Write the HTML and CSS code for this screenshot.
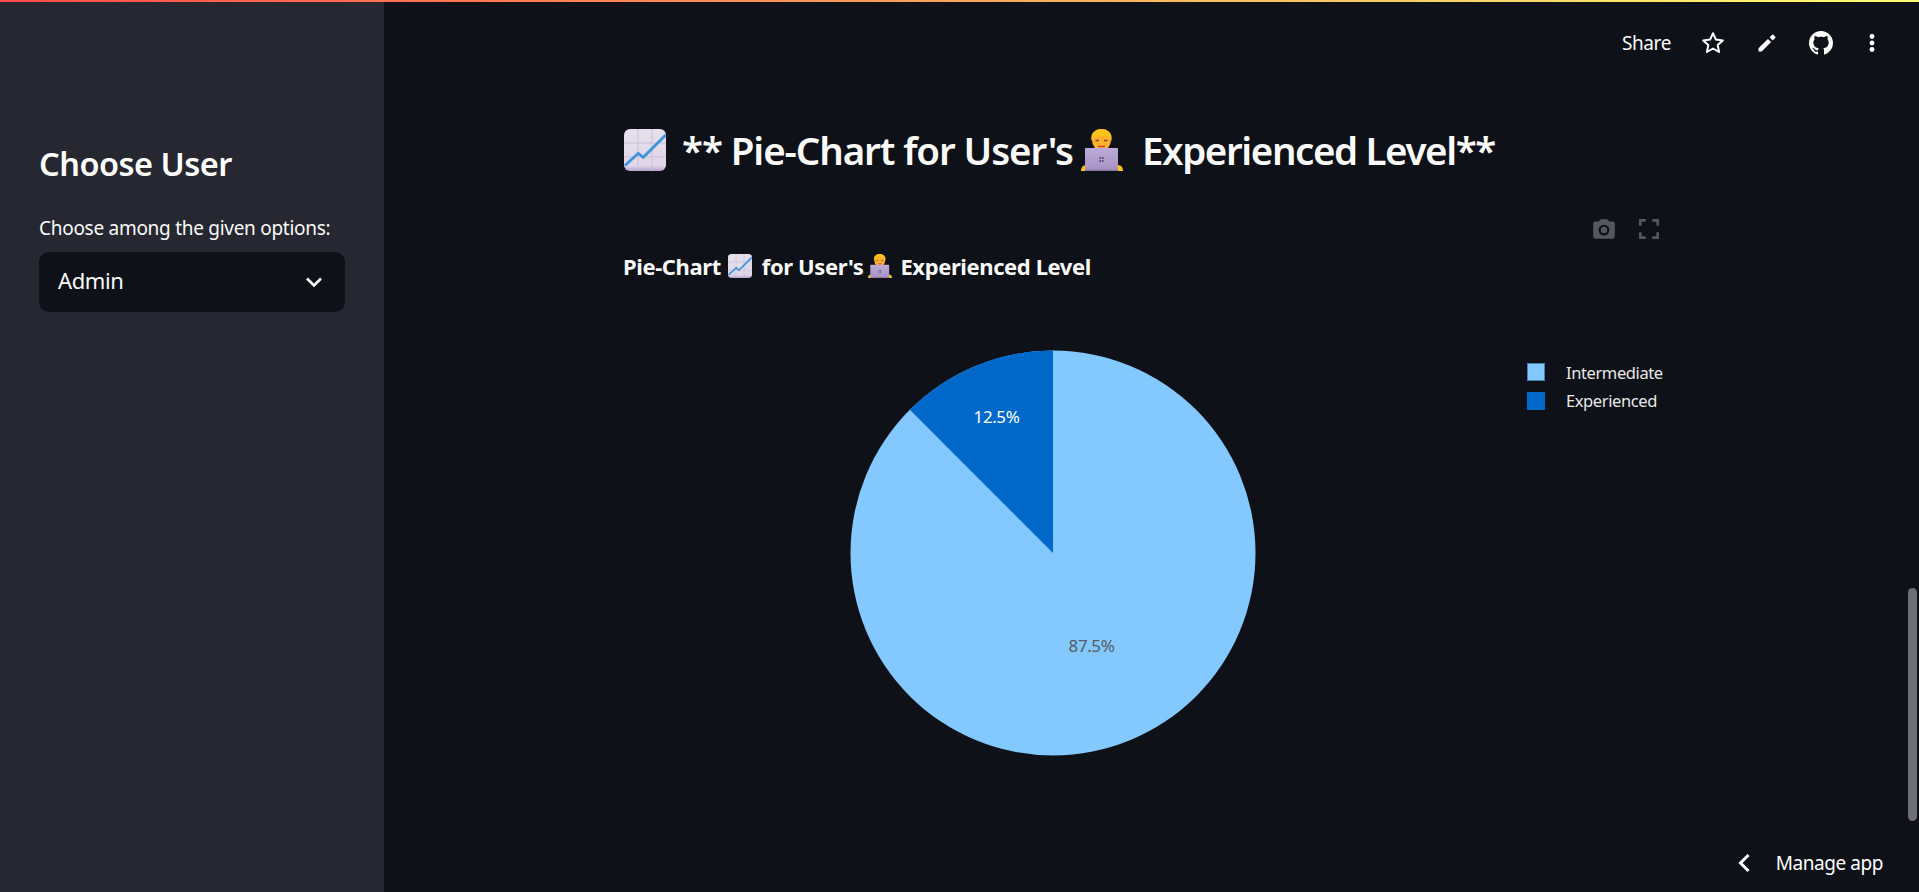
FILE: index.html
```html
<!DOCTYPE html>
<html lang="en">
<head>
    <meta charset="UTF-8">
    <title>Pie-Chart for User's Experienced Level</title>
    <link rel="stylesheet" href="styles.css">
</head>
<body>
<svg class="defs" width="0" height="0">
    <defs>
        <linearGradient id="chartBg" x1="0" y1="0" x2="0" y2="1">
            <stop offset="0" stop-color="#e6e0ec"/>
            <stop offset="0.88" stop-color="#dfd6e8"/>
            <stop offset="1" stop-color="#b39fcf"/>
        </linearGradient>
        <linearGradient id="laptopBg" x1="0" y1="0" x2="0" y2="1">
            <stop offset="0" stop-color="#bcabd9"/>
            <stop offset="1" stop-color="#a792c4"/>
        </linearGradient>
        <symbol id="emojiChart" viewBox="0 0 42 42">
            <rect width="42" height="42" rx="6" fill="url(#chartBg)"/>
            <path d="M14 0V42M28 0V42M0 14H42M0 28H42" stroke="#c9bfd3" stroke-width="1"/>
            <path d="M1 36.500L14.300 24.300L19.300 28.300L41.700 6" fill="none" stroke="#3f95dc" stroke-width="2.800"/>
        </symbol>
        <symbol id="emojiDev" viewBox="0 0 42 42">
            <path d="M0 42C0 38 2 36 6 36H36C40 36 42 38 42 42Z" fill="#fcc21b"/>
            <ellipse cx="20.500" cy="11" rx="9.500" ry="11" fill="#ffb02e"/>
            <path d="M10.500 12C9 3 15 0 20.500 0C26 0 32 3 30.500 12C29 8 27 7 20.500 7C14 7 12 8 10.500 12Z" fill="#fcc21b"/>
            <path d="M14.500 11.500h3.500M23 11.500h3.500" stroke="#7d4533" stroke-width="1.300" fill="none"/>
            <path d="M17 17.500h7" stroke="#c4403d" stroke-width="1.500" fill="none"/>
            <rect x="4" y="19" width="33" height="22" rx="1" fill="url(#laptopBg)"/>
            <rect x="4" y="40.500" width="33" height="1.500" fill="#8a76a5"/>
            <path d="M18.500 28h1.600v2h-1.600zM21 28h1.600v2h-1.600zM18.500 31h1.600v2h-1.600zM21 31h1.600v2h-1.600z" fill="#5d4a78"/>
        </symbol>
    </defs>
</svg>

<div class="topline"></div>

<div class="app">
    <aside class="sidebar">
        <h2 class="side-title">Choose User</h2>
        <label class="side-label">Choose among the given options:</label>
        <div class="select">
            <span class="select-value">Admin</span>
            <svg class="select-arrow" viewBox="0 0 24 24"><path d="M5 8.500l7 7 7-7" fill="none" stroke="#fff" stroke-width="2.600"/></svg>
        </div>
    </aside>

    <main class="main">
        <header class="toolbar">
            <span class="share">Share</span>
            <svg class="tool-icon" viewBox="0 0 24 24"><path d="M12 2.200l2.900 6.400 6.900.8-5.100 4.700 1.400 6.900-6.100-3.500-6.100 3.500 1.400-6.900-5.100-4.700 6.900-.8z" fill="none" stroke="#fff" stroke-width="2" stroke-linejoin="round"/></svg>
            <svg class="tool-icon" viewBox="0 0 24 24"><path d="M3.500 17.300V20.500h3.200L16.100 11.100l-3.200-3.200zM20.300 6.900a.85.85 0 0 0 0-1.200l-2-2a.85.85 0 0 0-1.200 0l-2.500 2.500 3.200 3.200z" fill="#fff"/></svg>
            <svg class="tool-icon" viewBox="0 0 16 16"><path d="M8 0C3.580 0 0 3.580 0 8c0 3.540 2.290 6.530 5.470 7.590.4.070.55-.17.55-.38 0-.19-.01-.82-.01-1.490-2.010.37-2.530-.49-2.690-.94-.09-.23-.48-.94-.82-1.130-.28-.15-.68-.52-.01-.53.630-.01 1.080.58 1.230.82.720 1.210 1.870.870 2.330.660.070-.520.280-.870.510-1.070-1.780-.2-3.640-.89-3.640-3.950 0-.87.310-1.590.820-2.150-.08-.2-.36-1.020.08-2.120 0 0 .67-.21 2.200.82.640-.18 1.320-.27 2-.27s1.360.09 2 .27c1.530-1.040 2.200-.82 2.200-.82.440 1.100.16 1.920.08 2.120.51.560.82 1.270.82 2.150 0 3.070-1.870 3.750-3.650 3.950.29.250.54.730.54 1.480 0 1.070-.01 1.930-.01 2.200 0 .21.150.46.550.38A8.010 8.010 0 0 0 16 8c0-4.420-3.580-8-8-8z" fill="#fff"/></svg>
            <svg class="tool-icon dots" viewBox="0 0 24 24"><circle cx="12" cy="5.500" r="2.400" fill="#fff"/><circle cx="12" cy="12" r="2.400" fill="#fff"/><circle cx="12" cy="18.500" r="2.400" fill="#fff"/></svg>
        </header>

        <section class="content">
            <h1 class="page-title">
                <svg class="emoji-big first"><use href="#emojiChart"/></svg>
                <span>** Pie-Chart for User's</span>
                <svg class="emoji-big dev"><use href="#emojiDev"/></svg>
                <span class="title-end">Experienced Level**</span>
            </h1>

            <div class="plot">
                <div class="modebar">
                    <svg viewBox="0 0 24 24"><path d="M9 3L7.200 5H4a2 2 0 0 0-2 2v12a2 2 0 0 0 2 2h16a2 2 0 0 0 2-2V7a2 2 0 0 0-2-2h-3.200L15 3zM12 8a5 5 0 1 1 0 10 5 5 0 0 1 0-10zM12 10a3 3 0 1 0 0 6 3 3 0 0 0 0-6z" fill="#55575d" fill-rule="evenodd"/></svg>
                    <svg viewBox="0 0 24 24"><path d="M4 9V4h5M15 4h5v5M20 15v5h-5M9 20H4v-5" fill="none" stroke="#55575d" stroke-width="2.400"/></svg>
                </div>
                <h3 class="plot-title">
                    <span>Pie-Chart</span>
                    <svg class="emoji-small chart"><use href="#emojiChart"/></svg>
                    <span>for User's</span>
                    <svg class="emoji-small dev"><use href="#emojiDev"/></svg>
                    <span>Experienced Level</span>
                </h3>

                <div class="plot-body">
                    <svg class="pie" width="406" height="406" viewBox="0 0 406 406">
                        <circle cx="203" cy="203" r="202.500" fill="#83c9ff"/>
                        <path d="M203 203V.5A202.500 202.500 0 0 0 59.800 59.800Z" fill="#0068c9"/>
                        <text class="pie-label" x="146.500" y="68" fill="#fff">12.5%</text>
                        <text class="pie-label" x="241.500" y="297" fill="#555a63">87.5%</text>
                    </svg>
                    <ul class="legend">
                        <li><i class="swatch light"></i>Intermediate</li>
                        <li><i class="swatch dark"></i>Experienced</li>
                    </ul>
                </div>
            </div>
        </section>

        <div class="scrollbar"></div>
        <div class="manage">
            <svg viewBox="0 0 24 24"><path d="M16.500 4L8.500 12l8 8" fill="none" stroke="#fff" stroke-width="3"/></svg>
            <span>Manage app</span>
        </div>
    </main>
</div>
</body>
</html>
```

FILE: styles.css
```css
* {
    box-sizing: border-box;
}

html, body {
    height: 100%;
}

body {
    margin: 0;
    overflow: hidden;
    background: #0e1117;
    color: #fafafa;
    font-family: "Noto Sans", "Open Sans", sans-serif;
}

.defs {
    position: absolute;
}

.topline {
    height: 2px;
    background: linear-gradient(90deg, #ff4b4b, #ffff6e);
}

.app {
    display: flex;
    height: 890px;
}

/* sidebar */
.sidebar {
    width: 384px;
    flex-shrink: 0;
    padding: 140px 39px 0;
    background: #262730;
}

.side-title {
    margin: 0 0 30px;
    font-size: 32.500px;
    line-height: 44px;
    font-weight: 600;
    letter-spacing: -0.5px;
    color: #fff;
}

.side-label {
    display: block;
    margin-bottom: 12px;
    font-size: 19px;
    line-height: 24px;
    letter-spacing: -0.28px;
}

.select {
    display: flex;
    align-items: center;
    justify-content: space-between;
    width: 306px;
    height: 60px;
    padding: 0 19px 0 19px;
    border-radius: 10px;
    background: #0e1117;
    font-size: 22px;
    letter-spacing: -0.4px;
}

.select-value {
    margin-bottom: 4px;
}

.select-arrow {
    width: 24px;
    height: 24px;
}

/* main area */
.main {
    position: relative;
    flex: 1;
    min-width: 0;
}

.toolbar {
    display: flex;
    align-items: center;
    justify-content: flex-end;
    height: 40px;
    margin-top: 21px;
    padding-right: 35px;
    gap: 30px;
}

.share {
    font-size: 19px;
    letter-spacing: -0.4px;
}

.tool-icon {
    width: 24px;
    height: 24px;
}

.tool-icon.dots {
    margin-left: -3px;
}

.content {
    width: 1050px;
    margin-left: 238px;
    padding-top: 57px;
}

.page-title {
    display: flex;
    align-items: center;
    height: 60px;
    margin: 0;
    font-size: 38.500px;
    font-weight: 600;
    letter-spacing: -1.1px;
    white-space: nowrap;
    color: #fafafa;
}

.title-end {
    letter-spacing: -1.4px;
}

.emoji-big {
    width: 42px;
    height: 42px;
    flex-shrink: 0;
}

.emoji-big.first {
    margin: 0 16px 0 2px;
}

.emoji-big.dev {
    margin: 0 19px 0 8px;
}

.plot {
    position: relative;
    margin-top: 72px;
}

.modebar {
    position: absolute;
    top: -36px;
    right: 10px;
    display: flex;
    gap: 19px;
}

.modebar svg {
    width: 26px;
    height: 26px;
}

.plot-title {
    display: flex;
    align-items: center;
    height: 28px;
    margin: 0;
    padding-left: 1px;
    font-size: 22px;
    font-weight: 700;
    letter-spacing: -0.4px;
    white-space: nowrap;
}

.emoji-small {
    width: 24px;
    height: 24px;
    flex-shrink: 0;
}

.emoji-small.chart {
    margin: 0 10px 0 7px;
}

.emoji-small.dev {
    margin: 0 8px 0 5px;
}

.plot-body {
    display: flex;
    align-items: flex-start;
    margin-top: 70px;
    padding-left: 228px;
}

.pie-label {
    font-size: 17px;
    letter-spacing: -0.4px;
    text-anchor: middle;
    dominant-baseline: middle;
}

.legend {
    list-style: none;
    margin: 8px 0 0 271px;
    padding: 0;
    font-size: 16.500px;
    letter-spacing: -0.4px;
    color: #e8e8e8;
}

.legend li {
    display: flex;
    align-items: center;
    height: 28.500px;
    white-space: nowrap;
}

.swatch {
    width: 18px;
    height: 18px;
    margin-right: 21px;
}

.swatch.light {
    background: #83c9ff;
    border: 1px solid #4a7ea6;
}

.swatch.dark {
    background: #0068c9;
}

/* overlays */
.scrollbar {
    position: absolute;
    right: 2px;
    top: 586px;
    width: 9px;
    height: 233px;
    border-radius: 5px;
    background: #6e7074;
}

.manage {
    position: absolute;
    right: 36px;
    bottom: 9px;
    display: flex;
    align-items: center;
    gap: 20px;
    height: 40px;
    font-size: 19px;
    letter-spacing: -0.45px;
    color: #fff;
}

.manage svg {
    width: 24px;
    height: 24px;
}
```
